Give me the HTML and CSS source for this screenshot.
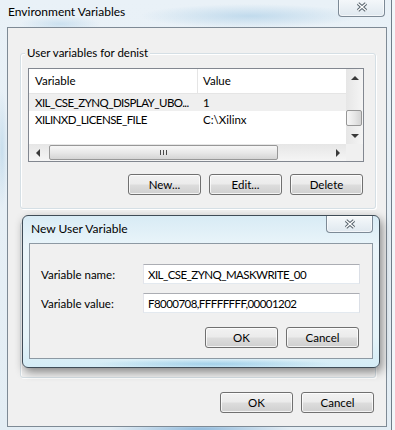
FILE: index.html
```html
<!DOCTYPE html>
<html lang="en">
<head>
  <meta charset="UTF-8">
  <title>Environment Variables</title>
  <link rel="stylesheet" href="styles.css">
</head>
<body>

  <div class="window">
    <div class="titlebar">
      <span class="title">Environment Variables</span>
      <div class="close-btn">
        <svg width="12" height="10" viewBox="0 0 12 10"><path d="M2 1.5 L10 8.5 M10 1.5 L2 8.5" stroke="#55616b" stroke-width="3.4" fill="none"/><path d="M2 1.5 L10 8.5 M10 1.5 L2 8.5" stroke="#fff" stroke-width="1.4" fill="none"/></svg>
      </div>
    </div>

    <div class="client">
      <div class="group">
        <div class="group-title">User variables for denist</div>
        <div class="listview">
          <div class="list-body">
            <div class="list-row list-head"><span>Variable</span><span>Value</span></div>
            <div class="list-row selected"><span class="ident">XIL_CSE_ZYNQ_DISPLAY_UBO...</span><span>1</span></div>
            <div class="list-row"><span class="ident">XILINXD_LICENSE_FILE</span><span>C:\Xilinx</span></div>
          </div>
          <div class="vscroll">
            <div class="sb-btn"><i class="arrow-up"></i></div>
            <div class="sb-track sb-track-top"></div>
            <div class="sb-thumb-v"></div>
            <div class="sb-track"></div>
            <div class="sb-btn"><i class="arrow-down"></i></div>
          </div>
          <div class="hscroll">
            <div class="sb-btn"><i class="arrow-left"></i></div>
            <div class="sb-thumb-h"><i class="grip"></i></div>
            <div class="sb-track"></div>
            <div class="sb-btn"><i class="arrow-right"></i></div>
          </div>
          <div class="corner"></div>
        </div>
        <div class="btn-row">
          <button class="btn">New...</button>
          <button class="btn">Edit...</button>
          <button class="btn">Delete</button>
        </div>
      </div>

      <div class="group group-system"></div>

      <div class="btn-row footer">
        <button class="btn">OK</button>
        <button class="btn">Cancel</button>
      </div>
    </div>
  </div>

  <div class="dialog">
    <div class="dialog-titlebar">
      <span class="title">New User Variable</span>
      <div class="close-btn small">
        <svg width="12" height="10" viewBox="0 0 12 10"><path d="M2 1.5 L10 8.5 M10 1.5 L2 8.5" stroke="#55616b" stroke-width="3.4" fill="none"/><path d="M2 1.5 L10 8.5 M10 1.5 L2 8.5" stroke="#fff" stroke-width="1.4" fill="none"/></svg>
      </div>
    </div>
    <div class="dialog-client">
      <div class="form">
        <label>Variable name:</label>
        <input class="ident" type="text" value="XIL_CSE_ZYNQ_MASKWRITE_00">
        <label>Variable value:</label>
        <input class="ident" type="text" value="F8000708,FFFFFFFF,00001202">
      </div>
      <div class="btn-row dialog-btns">
        <button class="btn">OK</button>
        <button class="btn">Cancel</button>
      </div>
    </div>
  </div>

</body>
</html>
```

FILE: styles.css
```css
* { box-sizing: border-box; }
body {
  margin: 0;
  width: 395px;
  height: 430px;
  overflow: hidden;
  font-family: Lato, "Liberation Sans", sans-serif;
  font-size: 11.5px;
  color: #000;
  background: #f2f6f9;
}
.ident { letter-spacing: -0.55px; }
.window {
  width: 392px;
  height: 430px;
  border-right: 1px solid #6f7d89;
  background:
    radial-gradient(ellipse 110px 12px at 250px 16px, rgba(160,200,228,.55), transparent),
    radial-gradient(ellipse 40px 8px at 60px 24px, rgba(160,200,228,.4), transparent),
    radial-gradient(ellipse 90px 6px at 200px 429px, rgba(110,165,210,.7), transparent),
    radial-gradient(ellipse 6px 60px at 2px 150px, rgba(170,205,228,.5), transparent),
    linear-gradient(#e9f1f7, #e3edf4);
}
.titlebar {
  display: flex;
  justify-content: space-between;
  height: 27px;
}
.title {
  padding: 4px 0 0 8px;
  font-size: 12px;
  line-height: 16px;
}
.close-btn {
  width: 47px;
  height: 19px;
  margin: -2px 6px 0 0;
  border: 1px solid #7d8a96;
  border-top: none;
  border-radius: 0 0 4px 4px;
  background: linear-gradient(#f6f9fb, #dfe8ef);
  box-shadow: inset 0 0 0 1px rgba(255,255,255,.6);
  display: flex;
  align-items: center;
  justify-content: center;
}

.client {
  width: 380px;
  height: 400px;
  margin-left: 7px;
  border: 1px solid #7e8a95;
  background: #f0f0f0;
  padding: 25px 10px 0 12px;
}
.group {
  border: 1px solid #d5dfe5;
  border-radius: 3px;
  box-shadow: inset 1px 1px 0 #fff, 1px 1px 0 #fff;
  padding-bottom: 13px;
}
.group-title {
  display: table;
  margin: -9px 0 0 4px;
  padding: 0 2px;
  line-height: 16px;
  background: #f0f0f0;
}
.group-system {
  height: 156px;
  margin-top: 13px;
}

.listview {
  margin: 7px 11px 0 7px;
  height: 94px;
  border: 1px solid #828790;
  background: #fff;
  display: grid;
  grid-template-columns: 1fr 17px;
  grid-template-rows: 1fr 17px;
}
.list-row {
  display: grid;
  grid-template-columns: 169px 1fr;
  height: 17px;
  line-height: 17px;
  white-space: nowrap;
}
.list-row span { padding-left: 6px; overflow: hidden; }
.list-row span + span { padding-left: 5px; }
.list-head {
  height: 25px;
  line-height: 24px;
  border-bottom: 1px solid #e5e5e5;
}
.list-head span:first-child { border-right: 1px solid #e5e5e5; }
.selected { background: #efefef; }

.vscroll {
  display: flex;
  flex-direction: column;
  background: linear-gradient(to right, #e6e6e6, #f5f5f5);
}
.hscroll {
  display: flex;
  background: linear-gradient(#e6e6e6, #f5f5f5);
}
.sb-btn {
  flex: 0 0 17px;
  display: flex;
  align-items: center;
  justify-content: center;
}
.sb-track { flex: 1; }
.sb-track-top { flex: 0 0 24px; }
.sb-thumb-v {
  flex: 0 0 16px;
  margin: 0 1px 0 0;
  border: 1px solid #979797;
  border-radius: 2px;
  background: linear-gradient(to right, #f7f7f7, #e8e8e8 50%, #d4d4d4);
}
.sb-thumb-h {
  flex: 0 0 229px;
  margin: 1px 0 1px 3px;
  border: 1px solid #979797;
  border-radius: 2px;
  background: linear-gradient(#f7f7f7, #e8e8e8 50%, #d4d4d4);
  display: flex;
  align-items: center;
  justify-content: center;
}
.grip {
  width: 8px;
  height: 5px;
  background: repeating-linear-gradient(to right, #4a4a4a 0 1px, transparent 1px 3px);
}
.corner { background: #f0f0f0; }
.arrow-up, .arrow-down, .arrow-left, .arrow-right { width: 0; height: 0; }
.arrow-up {
  border-left: 4px solid transparent;
  border-right: 4px solid transparent;
  border-bottom: 4px solid #3a3a3a;
}
.arrow-down {
  border-left: 4px solid transparent;
  border-right: 4px solid transparent;
  border-top: 4px solid #3a3a3a;
}
.arrow-left {
  border-top: 4px solid transparent;
  border-bottom: 4px solid transparent;
  border-right: 4px solid #3a3a3a;
}
.arrow-right {
  border-top: 4px solid transparent;
  border-bottom: 4px solid transparent;
  border-left: 4px solid #3a3a3a;
}

.btn-row {
  display: flex;
  justify-content: flex-end;
  gap: 8px;
  margin: 12px 12px 0 0;
}
.btn {
  width: 73px;
  height: 21px;
  padding: 0;
  font: inherit;
  color: #000;
  border: 1px solid #707070;
  border-radius: 3px;
  background: linear-gradient(#f2f2f2, #ebebeb 48%, #dddddd 52%, #cfcfcf);
  box-shadow: inset 0 0 0 1px rgba(255,255,255,.75);
}
.footer { margin: 14px 2px 0 0; }

.dialog {
  position: absolute;
  left: 22px;
  top: 215px;
  width: 358px;
  height: 153px;
  border: 1px solid #3f4c57;
  border-radius: 6px;
  padding: 0 6px 8px 6px;
  background:
    radial-gradient(ellipse 120px 5px at 190px 148px, rgba(130,190,225,.6), transparent),
    linear-gradient(#d8ebf5, #eaf5fa 20%, #e6f4f9 80%, #d4ecf6);
  box-shadow: 2px 4px 10px rgba(0,0,0,.45);
}
.dialog-titlebar {
  display: flex;
  justify-content: space-between;
  height: 27px;
}
.dialog-titlebar .title { padding: 5px 0 0 2px; }
.close-btn.small {
  height: 17px;
  margin: 0;
}
.dialog-client {
  height: 116px;
  border: 1px solid #8d99a3;
  background: #f0f0f0;
  padding: 20px 0 0 11px;
}
.form {
  display: grid;
  grid-template-columns: 102px 217px;
  row-gap: 9px;
  align-items: center;
}
.form input {
  height: 20px;
  font-family: inherit;
  font-size: inherit;
  padding: 0 0 0 4px;
  border: 1px solid;
  border-color: #abadb3 #dbdfe6 #e3e9ef #e2e3ea;
  background: #fff;
  outline: none;
}
.dialog-btns { margin: 14px 13px 0 0; }
```
